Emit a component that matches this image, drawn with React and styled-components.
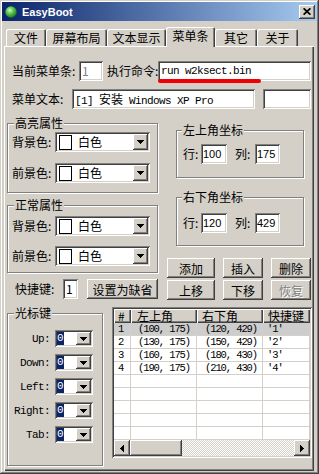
import React from 'react';
import styled, { createGlobalStyle, css } from 'styled-components';

const FACE = '#d4d0c8';

const GlobalStyle = createGlobalStyle`
  * { box-sizing: border-box; }
  html, body { margin: 0; padding: 0; background: ${FACE}; }
  body {
    font-family: "Noto Sans CJK SC", "Liberation Sans", sans-serif;
    font-size: 12px;
    color: #000;
  }
`;

const raised = css`
  background: ${FACE};
  box-shadow: inset -1px -1px #404040, inset 1px 1px #fff, inset -2px -2px #808080, inset 2px 2px ${FACE};
`;

const sunken = css`
  background: #fff;
  box-shadow: inset 1px 1px #808080, inset -1px -1px #fff, inset 2px 2px #404040, inset -2px -2px ${FACE};
`;

const mono = css`
  font-family: "Liberation Mono", "Noto Sans CJK SC", monospace;
  font-size: 11px;
  letter-spacing: -0.6px;
`;

const Window = styled.div`
  width: 319px;
  height: 474px;
  padding: 2px;
  display: flex;
  flex-direction: column;
  background: ${FACE};
  box-shadow: inset -1px -1px #404040, inset 1px 1px ${FACE}, inset -2px -2px #808080, inset 2px 2px #fff;
`;

const TitleBar = styled.div`
  height: 19px;
  flex-shrink: 0;
  display: flex;
  align-items: center;
  padding: 0 2px 0 3px;
  background: linear-gradient(90deg, #0a246a 0%, #a6caf0 100%);
`;

const TitleText = styled.span`
  flex: 1;
  margin-left: 5px;
  font-family: "Liberation Sans", Arial, sans-serif;
  font-weight: bold;
  font-size: 11px;
  color: #fff;
`;

const CloseButton = styled.div`
  width: 16px;
  height: 14px;
  display: flex;
  align-items: center;
  justify-content: center;
  ${raised}
`;

const Body = styled.div`
  flex: 1;
  display: flex;
  flex-direction: column;
  padding: 0 1px 1px 2px;
`;

const TabRow = styled.div`
  display: flex;
  align-items: flex-end;
  height: 19px;
  margin-top: 6px;
  padding-left: 2px;
`;

const Tab = styled.div`
  position: relative;
  z-index: ${p => (p.$active ? 1 : 0)};
  width: ${p => p.$w}px;
  height: ${p => (p.$active ? 20 : 17)}px;
  margin-bottom: ${p => (p.$active ? -1 : 0)}px;
  padding-bottom: ${p => (p.$active ? 2 : 0)}px;
  display: flex;
  align-items: center;
  justify-content: center;
  line-height: 12px;
  background: ${FACE};
  border-radius: 2px 2px 0 0;
  box-shadow: inset 1px 1px #fff, inset -1px 0 #404040, inset -2px 0 #808080;
`;

const Panel = styled.div`
  width: 310px;
  flex: 1;
  padding-top: 15px;
  box-shadow: inset 1px 1px #fff, inset -1px -1px #404040, inset -2px -2px #808080;
`;

const FormRow = styled.div`
  display: flex;
  align-items: center;
  height: 20px;
  margin-top: ${p => p.$mt || 0}px;
  margin-left: ${p => p.$ml || 0}px;
  padding-left: ${p => p.$pl || 0}px;
`;

const Label = styled.span`
  flex-shrink: 0;
  width: ${p => p.$w}px;
  margin-left: ${p => p.$ml || 0}px;
  white-space: nowrap;
  line-height: 20px;
`;

const Field = styled.div`
  position: relative;
  flex-shrink: 0;
  width: ${p => p.$w}px;
  height: 20px;
  margin-left: ${p => p.$ml || 0}px;
  padding: 0 ${p => p.$px ?? 3}px;
  line-height: 20px;
  white-space: nowrap;
  color: ${p => (p.$gray ? '#808080' : '#000')};
  ${sunken}
  ${p => p.$mono && mono}
  ${p => p.$sans && css`
    font-family: "Liberation Sans", Arial, sans-serif;
    font-size: 11px;
  `}
`;

const Cjk = styled.span`
  font-family: "Noto Sans CJK SC", sans-serif;
  font-size: 12px;
  letter-spacing: 0;
`;

const RedMark = styled.span`
  position: absolute;
  left: 0;
  top: 18px;
  width: 103px;
  height: 4px;
  border-radius: 2px;
  background: #f00000;
`;

const Middle = styled.div`
  display: flex;
  align-items: flex-start;
  margin: 14px 0 0 3px;
`;

const Column = styled.div`
  display: flex;
  flex-direction: column;
  width: ${p => p.$w}px;
  margin-left: ${p => p.$ml || 0}px;
`;

const Group = styled.div`
  position: relative;
  flex-shrink: 0;
  width: ${p => p.$w}px;
  height: ${p => p.$h}px;
  margin-top: ${p => p.$mt || 0}px;
  margin-left: ${p => p.$ml || 0}px;
  padding-top: ${p => p.$pt || 0}px;
  border: 1px solid #808080;
  box-shadow: 1px 1px 0 #fff, inset 1px 1px 0 #fff;
`;

const Legend = styled.span`
  position: absolute;
  top: -7px;
  left: ${p => p.$left ?? 6}px;
  padding: 0 1px;
  line-height: 12px;
  background: ${FACE};
  white-space: nowrap;
`;

const ComboBox = styled.div`
  display: flex;
  align-items: center;
  flex-shrink: 0;
  width: ${p => p.$w}px;
  height: ${p => p.$h}px;
  margin-left: ${p => p.$ml || 0}px;
  padding: 2px;
  ${sunken}
`;

const Swatch = styled.span`
  width: 13px;
  height: 15px;
  margin-left: 2px;
  border: 1px solid #000;
  background: #fff;
`;

const ComboText = styled.span`
  flex: 1;
  margin-left: 6px;
  line-height: 16px;
`;

const DropButton = styled.span`
  width: 15px;
  height: 100%;
  margin-left: auto;
  display: flex;
  align-items: center;
  justify-content: center;
  ${raised}
`;

const Button = styled.div`
  flex-shrink: 0;
  width: ${p => p.$w}px;
  height: 20px;
  margin-left: ${p => p.$ml || 0}px;
  display: flex;
  align-items: center;
  justify-content: center;
  color: ${p => (p.$disabled ? '#808080' : '#000')};
  text-shadow: ${p => (p.$disabled ? '1px 1px 0 #fff' : 'none')};
  ${raised}
`;

const ButtonGrid = styled.div`
  display: grid;
  grid-template-columns: 48px 40px 40px;
  grid-auto-rows: 20px;
  column-gap: 8px;
  row-gap: 2px;
  margin-top: 12px;
`;

const BottomRow = styled.div`
  display: flex;
  align-items: flex-start;
  margin: 7px 0 0 3px;
`;

const KeyRow = styled.div`
  display: flex;
  align-items: center;
  height: 17px;
  margin-top: ${p => p.$mt || 0}px;
`;

const KeyLabel = styled.span`
  width: 42px;
  text-align: right;
  white-space: nowrap;
  ${mono}
`;

const Selected = styled.span`
  ${mono}
  letter-spacing: 0;
  line-height: 13px;
  background: #0a246a;
  color: #fff;
`;

const ListView = styled.div`
  display: flex;
  flex-direction: column;
  width: 200px;
  height: 151px;
  margin-left: 9px;
  padding: 2px;
  ${sunken}
`;

const ListGrid = styled.div`
  width: 196px;
  height: 131px;
  display: grid;
  grid-template-columns: 17px 66px 66px 47px;
  grid-template-rows: 14px;
  grid-auto-rows: 13px;
`;

const HeaderCell = styled.div`
  padding-left: ${p => p.$pl}px;
  line-height: 14px;
  white-space: nowrap;
  background: ${FACE};
  box-shadow: inset 1px 1px #fff, inset -1px -1px #404040, inset -2px -2px #808080;
`;

const Cell = styled.div`
  padding-left: ${p => p.$pl}px;
  line-height: 12px;
  white-space: nowrap;
  border-right: 1px solid ${FACE};
  border-bottom: 1px solid ${FACE};
  background: ${p => (p.$selected ? '#cdcdcd' : '#fff')};
  font-family: "Liberation Mono", monospace;
  font-size: 10.5px;
  letter-spacing: -1.1px;
`;

const ScrollBar = styled.div`
  display: flex;
  height: 16px;
`;

const ScrollButton = styled.span`
  width: 16px;
  display: flex;
  align-items: center;
  justify-content: center;
  ${raised}
`;

const Thumb = styled.span`
  width: 52px;
  ${raised}
`;

const Track = styled.span`
  flex: 1;
  background-color: #fff;
  background-image: conic-gradient(${FACE} 25%, #fff 0 50%, ${FACE} 0 75%, #fff 0);
  background-size: 2px 2px;
`;

const AppIcon = () => (
  <svg width="12" height="12" viewBox="0 0 12 12">
    <defs>
      <radialGradient id="ball" cx="40%" cy="35%" r="70%">
        <stop offset="0" stopColor="#d2f7bd" />
        <stop offset="0.45" stopColor="#56c64e" />
        <stop offset="1" stopColor="#16701a" />
      </radialGradient>
    </defs>
    <circle cx="6" cy="6" r="5.7" fill="url(#ball)" />
  </svg>
);

const CloseGlyph = () => (
  <svg width="8" height="7" viewBox="0 0 8 7">
    <path d="M0.6 0.3L7.4 6.7M7.4 0.3L0.6 6.7" stroke="#000" strokeWidth="1.7" />
  </svg>
);

const DownArrow = () => (
  <svg width="7" height="4" viewBox="0 0 7 4" shapeRendering="crispEdges">
    <polygon points="0,0 7,0 3.5,4" fill="#000" />
  </svg>
);

const SideArrow = ({ right }) => (
  <svg width="4" height="7" viewBox="0 0 4 7" shapeRendering="crispEdges">
    <polygon points={right ? '0,0 4,3.5 0,7' : '4,0 0,3.5 4,7'} fill="#000" />
  </svg>
);

const tabs = [
  { label: '文件', w: 40 },
  { label: '屏幕布局', w: 61 },
  { label: '文本显示', w: 59 },
  { label: '菜单条', w: 49, active: true },
  { label: '其它', w: 42 },
  { label: '关于', w: 41 },
];

const keys = ['Up:', 'Down:', 'Left:', 'Right:', 'Tab:'];

const items = [
  ['1', '(100, 175)', '(120, 429)', '′1′'],
  ['2', '(130, 175)', '(150, 429)', '′2′'],
  ['3', '(160, 175)', '(180, 430)', '′3′'],
  ['4', '(190, 175)', '(210, 430)', '′4′'],
];

const pads = [4, 7, 8, 4];

const ColorField = ({ label, mt }) => (
  <FormRow $mt={mt} $pl={4}>
    <Label $w={43}>{label}</Label>
    <ComboBox $w={95} $h={20}>
      <Swatch />
      <ComboText>白色</ComboText>
      <DropButton><DownArrow /></DropButton>
    </ComboBox>
  </FormRow>
);

const CoordGroup = ({ title, mt, h, pt, row, col }) => (
  <Group $w={128} $h={h} $mt={mt} $ml={9} $pt={pt}>
    <Legend $left={5}>{title}</Legend>
    <FormRow $pl={6}>
      <Label $w={18}>行:</Label>
      <Field $w={26} $sans $px={2}>{row}</Field>
      <Label $w={20} $ml={8}>列:</Label>
      <Field $w={25} $sans $px={2}>{col}</Field>
    </FormRow>
  </Group>
);

export default function App() {
  return (
    <>
      <GlobalStyle />
      <Window>
        <TitleBar>
          <AppIcon />
          <TitleText>EasyBoot</TitleText>
          <CloseButton><CloseGlyph /></CloseButton>
        </TitleBar>
        <Body>
          <TabRow>
            {tabs.map(t => (
              <Tab key={t.label} $w={t.w} $active={t.active}>{t.label}</Tab>
            ))}
          </TabRow>
          <Panel>
            <FormRow $ml={8}>
              <Label $w={67}>当前菜单条:</Label>
              <Field $w={24} $gray>1</Field>
              <Label $w={51} $ml={4}>执行命令:</Label>
              <Field $w={153} $mono>run w2ksect.bin<RedMark /></Field>
            </FormRow>
            <FormRow $ml={8} $mt={8}>
              <Label $w={60}>菜单文本:</Label>
              <Field $w={183} $mono>[1] <Cjk>安装</Cjk> Windows XP Pro</Field>
              <Field $w={48} $ml={8} />
            </FormRow>

            <Middle>
              <Column $w={151}>
                <Group $w={151} $h={70} $pt={8}>
                  <Legend>高亮属性</Legend>
                  <ColorField label="背景色:" />
                  <ColorField label="前景色:" mt={11} />
                </Group>
                <Group $w={151} $h={68} $mt={12} $pt={10}>
                  <Legend>正常属性</Legend>
                  <ColorField label="背景色:" />
                  <ColorField label="前景色:" mt={10} />
                </Group>
                <FormRow $mt={6} $ml={8}>
                  <Label $w={48}>快捷键:</Label>
                  <Field $w={15}>1</Field>
                  <Button $w={71} $ml={9}>设置为缺省</Button>
                </FormRow>
              </Column>

              <Column $w={145} $ml={9}>
                <CoordGroup title="左上角坐标" mt={7} h={48} pt={13} row="100" col="175" />
                <CoordGroup title="右下角坐标" mt={19} h={49} pt={15} row="120" col="429" />
                <ButtonGrid>
                  <Button $w={48}>添加</Button>
                  <Button $w={40}>插入</Button>
                  <Button $w={40}>删除</Button>
                  <Button $w={48}>上移</Button>
                  <Button $w={40}>下移</Button>
                  <Button $w={40} $disabled>恢复</Button>
                </ButtonGrid>
              </Column>
            </Middle>

            <BottomRow>
              <Group $w={96} $h={153} $mt={6} $pt={16}>
                <Legend>光标键</Legend>
                {keys.map((k, i) => (
                  <KeyRow key={k} $mt={i ? 7 : 0}>
                    <KeyLabel>{k}</KeyLabel>
                    <ComboBox $w={38} $h={17} $ml={5}>
                      <Selected>0</Selected>
                      <DropButton><DownArrow /></DropButton>
                    </ComboBox>
                  </KeyRow>
                ))}
              </Group>

              <ListView>
                <ListGrid>
                  <HeaderCell $pl={4}>#</HeaderCell>
                  <HeaderCell $pl={6}>左上角</HeaderCell>
                  <HeaderCell $pl={5}>右下角</HeaderCell>
                  <HeaderCell $pl={5}>快捷键</HeaderCell>
                  {Array.from({ length: 9 }).map((_, r) =>
                    [0, 1, 2, 3].map(c => (
                      <Cell key={`${r}-${c}`} $pl={pads[c]} $selected={r === 0}>
                        {items[r] ? items[r][c] : ''}
                      </Cell>
                    ))
                  )}
                </ListGrid>
                <ScrollBar>
                  <ScrollButton><SideArrow /></ScrollButton>
                  <Thumb />
                  <Track />
                  <ScrollButton><SideArrow right /></ScrollButton>
                </ScrollBar>
              </ListView>
            </BottomRow>
          </Panel>
        </Body>
      </Window>
    </>
  );
}
